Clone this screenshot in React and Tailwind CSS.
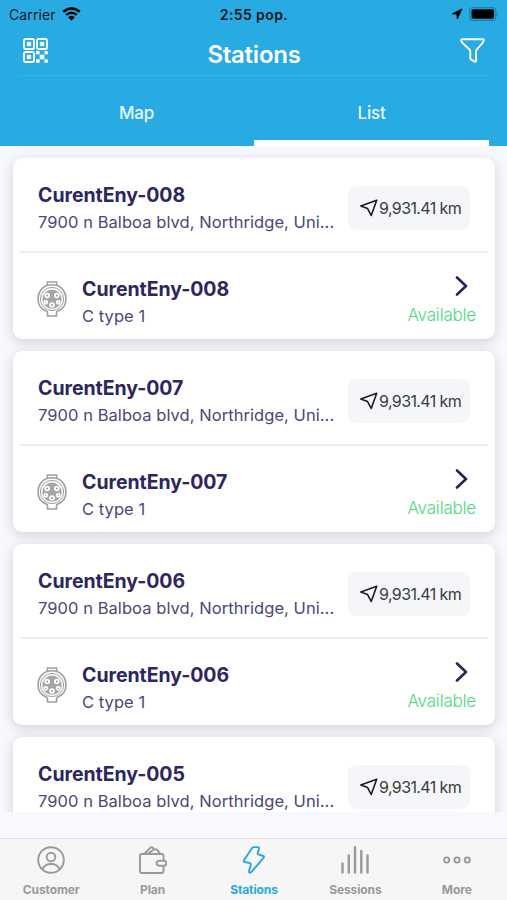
import React from "react";

const stations = [
  { name: "CurentEny-008", connectors: ["C type 1"] },
  { name: "CurentEny-007", connectors: ["C type 1"] },
  { name: "CurentEny-006", connectors: ["C type 1"] },
  { name: "CurentEny-005", connectors: [] },
];

const QrIcon = () => (
  <svg width="25" height="25" viewBox="0 0 25 25" fill="none">
    <g stroke="white" strokeWidth="1.8">
      <rect x="1" y="1" width="10" height="10" rx="1.6" />
      <rect x="14" y="1" width="10" height="10" rx="1.6" />
      <rect x="1" y="14" width="10" height="10" rx="1.6" />
    </g>
    <g stroke="white" strokeWidth="0.7" fill="white">
      <rect x="4.2" y="4.2" width="3.6" height="3.6" />
      <rect x="17.2" y="4.2" width="3.6" height="3.6" />
      <rect x="4.2" y="17.2" width="3.6" height="3.6" />
      <rect x="13.6" y="13.4" width="2.6" height="2.6" />
      <rect x="21.9" y="13.4" width="2.6" height="2.6" />
      <rect x="17" y="17" width="4" height="4" />
      <rect x="13.6" y="21.8" width="2.6" height="2.6" />
      <rect x="21.9" y="21.8" width="2.6" height="2.6" />
    </g>
  </svg>
);

const FilterIcon = () => (
  <svg width="25" height="25" viewBox="0 0 25 25" fill="none">
    <path
      d="M2.6 1.2h19.8q1.8 0 1.2 1.8-.4 1.2-1.4 2.3l-5.4 6.2q-.8.9-.8 2.2v8.8q0 1.7-1.6 1l-3.2-1.9q-.9-.5-.9-1.6v-6.300q0-1.300-.8-2.200L2.800 5.300Q1.700 4 1.300 3q-.5-1.800 1.300-1.800z"
      stroke="white"
      strokeWidth="1.9"
      strokeLinejoin="round"
    />
  </svg>
);

const WifiIcon = () => (
  <svg width="19" height="14" viewBox="0 0 19 14" fill="none">
    <path d="M1.2 4.7Q9.5-2 17.8 4.7" stroke="black" strokeWidth="2.6" />
    <path d="M4.1 7.9Q9.5 3.5 14.9 7.9" stroke="black" strokeWidth="2.5" />
    <path d="M6.2 10.2Q9.5 7.4 12.8 10.2L9.5 13.7z" fill="black" />
  </svg>
);

const ConnectorIcon = () => (
  <svg width="30" height="36" viewBox="0 0 30 36" fill="none" stroke="#9f9f9f">
    <path d="M10.200 4.500V1h9.600v3.500" strokeWidth="1.400" />
    <path
      d="M10.500 4.300C4.800 6 1 11.300 1 17.500c0 5.800 3.300 10.600 8 12.500.9.400 1.500 1 1.500 2v3h9v-3c0-1 .6-1.600 1.500-2 4.700-1.900 8-6.700 8-12.500 0-6.200-3.800-11.500-9.500-13.200q-4.500-1-9 0z"
      strokeWidth="1.600"
    />
    <circle cx="15" cy="18" r="11.600" strokeWidth="1" />
    <circle cx="15" cy="18.200" r="9.600" fill="#a6a6a6" stroke="none" />
    <g fill="#999" stroke="white" strokeWidth="1.800">
      <circle cx="10.200" cy="14.500" r="1.900" />
      <circle cx="19.800" cy="14.500" r="1.900" />
      <circle cx="8.800" cy="21.300" r="1.500" />
      <circle cx="21.200" cy="21.300" r="1.500" />
      <circle cx="15" cy="24" r="1.900" />
    </g>
  </svg>
);

const StationCard = ({ station }) => {
  return (
    <div className="h-[181px] shrink-0 rounded-[9px] bg-white px-[7px] shadow-[0_3px_12px_1px_rgba(0,0,0,0.14)]">
      <div className="flex h-[95px] items-start justify-between border-b-2 border-[#ededee] pr-[18px] pl-[18px]">
        <div className="pt-[23px]">
          <h2 className="text-[19.5px] leading-7 font-bold tracking-[-0.05px] whitespace-nowrap text-[#2d265f]">
            {station.name}
          </h2>
          <p className="-mt-px text-[16.5px] leading-7 tracking-[0.06px] whitespace-nowrap text-[#4c4779]">
            7900 n Balboa blvd, Northridge, Uni...
          </p>
        </div>
        <div className="mt-[28px] flex h-11 w-[122px] items-center rounded-lg bg-[#f5f6fa] pl-3">
          <svg width="18" height="18" viewBox="0 0 18 18" fill="none" className="shrink-0">
            <path
              d="M16.7 1.2.8 6.9l6.8 2.7L11.2 16.5z"
              stroke="#1c1c1c"
              strokeWidth="1.6"
              strokeLinejoin="round"
            />
          </svg>
          <span className="ml-[1px] text-[16px] tracking-[-0.6px] whitespace-nowrap text-[#3b3b3b]">
            9,931.41 km
          </span>
        </div>
      </div>

      {station.connectors.map((type) => (
        <div key={type} className="flex h-[86px] items-start pr-[12px] pl-[17px]">
          <div className="mt-[28px]">
            <ConnectorIcon />
          </div>
          <div className="ml-[15px] flex-1 pt-[22px]">
            <h3 className="text-[19.5px] leading-7 font-bold tracking-[-0.05px] text-[#2d265f]">
              {station.name}
            </h3>
            <p className="-mt-px text-[16.5px] leading-7 tracking-[0.06px] text-[#4c4779]">
              {type}
            </p>
          </div>
          <div className="flex flex-col items-end pt-[23px]">
            <svg width="14" height="20" viewBox="0 0 14 20" fill="none" className="mr-[7px]">
              <path
                d="m2 1.5 9 8.5-9 8.5"
                stroke="#29225c"
                strokeWidth="2.6"
                strokeLinecap="round"
                strokeLinejoin="round"
              />
            </svg>
            <span className="mt-[5px] text-[17px] leading-7 font-light tracking-[-0.2px] text-[#4cd980]">
              Available
            </span>
          </div>
        </div>
      ))}
    </div>
  );
};

const tabs = [
  {
    label: "Customer",
    icon: (
      <>
        <circle cx="14" cy="14" r="12.8" />
        <circle cx="14" cy="11" r="4.3" />
        <path d="M5.5 23c1.5-3.3 4.6-5 8.5-5s7 1.700 8.500 5" />
      </>
    ),
  },
  {
    label: "Plan",
    icon: (
      <>
        <path d="M24.500 14V10q0-2-2-2H2.500Q1 8 1 9.500V25q0 2 2 2h19.500q2 0 2-2v-4" />
        <path d="M20.500 14.700h4.500q2.200 0 2.200 2v1.100q0 2-2.200 2h-4.500q-3-.4-3-2.550t3-2.550z" />
        <path d="M5.500 7.500 11.500 1.600q1.300-.9 2.500.4M9 7.500l6.500-4.200q1.500-.6 2.700.6l2.800 3.600" />
      </>
    ),
  },
  {
    label: "Stations",
    active: true,
    icon: (
      <path d="M12.300 1.700 4 14.300q-.7 1.300.7 1.700l5.300 1.100q1 .3.800 1.300L9 25.300q-.1 1.500 1.200 1.400.8-.1 1.400-.9L23.700 11.700q.8-1.200-.4-1.700l-5-1.700q-.9-.4-.6-1.300l1.300-4.200q.4-1.700-1.200-1.700h-3.600q-1.200 0-1.900.6z" />
    ),
  },
  {
    label: "Sessions",
    icon: (
      <path
        d="M1.5 17.5v9M7.8 9.5v17M14 1.2v25.3M20.3 5v21.500M26.500 9.500v17"
        strokeWidth="2.4"
      />
    ),
  },
  {
    label: "More",
    icon: (
      <>
        <circle cx="3.7" cy="14" r="2.6" />
        <circle cx="14" cy="14" r="2.6" />
        <circle cx="24.3" cy="14" r="2.6" />
      </>
    ),
  },
];

const App = () => {
  return (
    <div className="flex h-[900px] w-[507px] flex-col overflow-hidden bg-[#f7f9fe] font-['Inter',sans-serif] text-[#29225c]">
      <header className="h-[146px] shrink-0 bg-[#28aae3]">
        <div className="grid h-7 grid-cols-3 items-center pr-2 pl-[9px] text-[14px] text-[#101820]">
          <div className="flex items-center gap-[6px]">
            <span className="tracking-[0.1px]">Carrier</span>
            <WifiIcon />
          </div>
          <span className="text-center text-[14px] font-semibold tracking-[0.4px]">2:55 pop.</span>
          <div className="flex items-center justify-end gap-[6px]">
            <svg width="12" height="12" viewBox="0 0 12 12">
              <path
                d="M11 1 1 5.8l4.8.5.5 4.700z"
                fill="black"
                stroke="black"
                strokeWidth="0.8"
                strokeLinejoin="round"
              />
            </svg>
            <svg width="30" height="14" viewBox="0 0 30 14" fill="none">
              <rect
                x=".8"
                y=".7"
                width="26"
                height="12.6"
                rx="3.5"
                stroke="#1a7fac"
                strokeWidth="1.2"
              />
              <rect x="2.5" y="2.3" width="22.6" height="9.4" rx="2" fill="black" />
              <path d="M28 5q2 2 0 4z" fill="#1a7fac" />
            </svg>
          </div>
        </div>

        <div className="mx-[18px] flex h-12 items-start justify-between border-b border-[#3bb1e5] pr-1 pl-[5px]">
          <div className="mt-[10px]">
            <QrIcon />
          </div>
          <h1 className="mt-[11px] text-[24px] leading-8 font-semibold tracking-[-0.25px] text-white">
            Stations
          </h1>
          <div className="mt-[10px]">
            <FilterIcon />
          </div>
        </div>

        <div className="mx-[18px] flex h-[70px] text-[17px] font-medium tracking-[-0.25px] text-[#eaf8ff]">
          <div className="flex h-full w-[236px] items-center justify-center pt-[5px] pl-px">Map</div>
          <div className="flex h-full w-[235px] items-center justify-center border-b-[6px] border-white pt-[11px]">
            List
          </div>
        </div>
      </header>

      <main className="flex h-[666px] shrink-0 flex-col gap-3 overflow-hidden pt-3 pr-[12px] pl-[13px]">
        {stations.map((station) => (
          <StationCard key={station.name} station={station} />
        ))}
      </main>

      <nav className="mt-[26px] grid h-[62px] shrink-0 grid-cols-5 border-t border-[#dfe1e3] bg-[#f6f6f6]">
        {tabs.map((tab) => (
          <div
            key={tab.label}
            className={`flex flex-col items-center pt-[7px] pl-px ${tab.active ? "text-[#28a8e0]" : "text-[#999]"}`}
          >
            <svg
              width="28"
              height="28"
              viewBox="0 0 28 28"
              fill="none"
              stroke="currentColor"
              strokeWidth="1.9"
              strokeLinecap="round"
              strokeLinejoin="round"
            >
              {tab.icon}
            </svg>
            <span className="mt-[8px] text-[12px] leading-4 font-bold tracking-[-0.1px]">
              {tab.label}
            </span>
          </div>
        ))}
      </nav>
    </div>
  );
};

export default App;
